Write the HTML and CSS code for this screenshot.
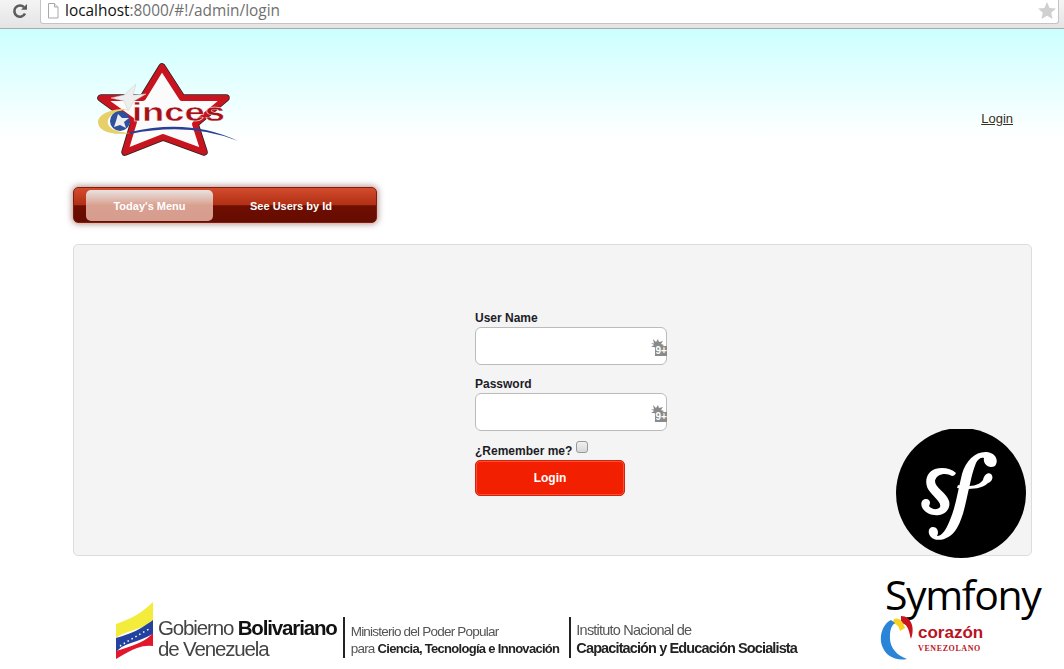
FILE: index.html
```html
<!DOCTYPE html>
<html lang="en">
<head>
    <meta charset="UTF-8">
    <title>Login</title>
    <link rel="stylesheet" href="styles.css">
</head>
<body>
<!-- barra del navegador -->
<div class="toolbar">
    <svg class="reload" width="16" height="16" viewBox="0 0 16 16">
        <path d="M13 10.5A5.6 5.6 0 1 1 12 4.2" fill="none" stroke="#5c5c5c" stroke-width="2.6"/>
        <path d="M9 6.8h6V1z" fill="#5c5c5c"/>
    </svg>
    <div class="urlbox">
        <svg class="pageicon" width="12" height="16" viewBox="0 0 12 16">
            <path d="M1.5.5h6l3.5 3.5v11H1.5z" fill="#fff" stroke="#a8a8a8"/>
            <path d="M7.5.5v3.5H11" fill="#eee" stroke="#a8a8a8"/>
        </svg>
        <span class="url"><b>localhost</b>:8000/#!/admin/login</span>
        <svg class="bookmark" width="18" height="17" viewBox="0 0 18 17">
            <path d="M9 0l2.6 5.9 6.4.6-4.800 4.200 1.400 6.300L9 13.700 3.400 17l1.400-6.300L0 6.500l6.400-.6z" fill="#d0d0d0"/>
        </svg>
    </div>
</div>

<div class="page">
    <div class="header">
        <svg class="logo" width="146" height="100" viewBox="95 60 146 100">
            <polygon points="162,67 182,98 226,98 195,124 204,152 163,137 125,152 134,122 101,98 143,98" fill="#222" stroke="#222" stroke-width="7.500" stroke-linejoin="round"/>
            <polygon points="162,67 182,98 226,98 195,124 204,152 163,137 125,152 134,122 101,98 143,98" fill="#fbfbfb" stroke="#c8141e" stroke-width="6" stroke-linejoin="round"/>
            <path d="M128 109C112 108 98 114 98 122C98 131 112 136 130 133C116 132 106 128 108 120C110 114 118 111 128 109z" fill="#e8d068"/>
            <circle cx="120" cy="121" r="10" fill="#2f4f9f"/>
            <path d="M130 132Q190 118 238 141Q190 122 130 134z" fill="#2a3f96"/>
            <polygon points="136,84 133,95 146,94 134,101 128,111 124,101 111,98 124,95" fill="#eee" stroke="#ccc" stroke-width=".5"/>
            <polygon points="118,114 122,118 129,118 124,122 126,128 120,125 114,127 116,121" fill="#eee"/>
            <text class="logotext" x="132" y="121" textLength="93" lengthAdjust="spacingAndGlyphs">inces</text>
        </svg>
        <a class="login-link" href="#">Login</a>
    </div>

    <div class="menu">
        <a class="menu-item active" href="#">Today's Menu</a>
        <a class="menu-item" href="#">See Users by Id</a>
    </div>

    <div class="panel">
        <form class="login-form">
            <label class="field-label">User Name</label>
            <div class="input-wrap">
                <input type="text" class="field">
                <svg class="ext" width="16" height="18" viewBox="0 0 16 18">
                    <path d="M2 1l3 3 2-3 1 3 4-1-2 3 3 1-3 2v2H6L3 9 0 9l3-2-3-2 3 .5z" fill="#8a8a8a"/>
                    <rect x="4" y="8" width="12" height="10" fill="#8a8a8a"/>
                    <text class="ext-text" x="4.500" y="16">9+</text>
                </svg>
            </div>
            <label class="field-label">Password</label>
            <div class="input-wrap">
                <input type="password" class="field">
                <svg class="ext" width="16" height="18" viewBox="0 0 16 18">
                    <path d="M2 1l3 3 2-3 1 3 4-1-2 3 3 1-3 2v2H6L3 9 0 9l3-2-3-2 3 .5z" fill="#8a8a8a"/>
                    <rect x="4" y="8" width="12" height="10" fill="#8a8a8a"/>
                    <text class="ext-text" x="4.500" y="16">9+</text>
                </svg>
            </div>
            <div class="remember">
                <span>¿Remember me?</span>
                <span class="check"></span>
            </div>
            <button type="button" class="login-btn">Login</button>
        </form>
    </div>

    <div class="footer">
        <svg class="flag" width="39" height="58" viewBox="0 0 39 58">
            <path d="M1 22Q18 16 26 10T38 0V20Q26 26 16 29T1 36z" fill="#f4ec3c"/>
            <path d="M1 36Q18 31 26 26T38 18V32Q26 38 16 41T1 50z" fill="#2342a0"/>
            <path d="M1 49Q18 44 26 40T38 31V44Q30 43 22 46T1 57z" fill="#e2172b"/>
            <path d="M5 44Q18 36 34 27" fill="none" stroke="#fff" stroke-width="1.500" stroke-dasharray="1.500 3"/>
        </svg>
        <div class="gob">
            <div>Gobierno <b>Bolivariano</b></div>
            <div>de Venezuela</div>
        </div>
        <div class="min">
            <div>Ministerio del Poder Popular</div>
            <div>para <b>Ciencia, Tecnología e Innovación</b></div>
        </div>
        <div class="inst">
            <div>Instituto Nacional de</div>
            <div><b>Capacitación y Educación Socialista</b></div>
        </div>
    </div>

    <!-- logos sobre el panel -->
    <div class="side">
        <div class="sf-crop">
            <svg class="sf" width="130" height="130" viewBox="0 0 130 130">
                <circle cx="65" cy="65" r="65" fill="#000"/>
                <g fill="#fff">
                    <path d="M99 38C103 33 100 25 91 24C80 23 70 32 66 46C62 62 60 78 54 92C50 102 46 108 41 108C43 105 42 99 37 99C32 99 31 106 36 110C42 114 54 112 61 100C68 88 70 72 74 56C76 46 78 40 80 35C82 31 85 29 88 30C87 34 90 39 95 39Q97 39 99 38z"/>
                    <path d="M62 57C70 59 82 59 87 52C88 47 92 44 95 46C98 49 96 54 92 55C86 61 74 62 61 60z"/>
                    <path d="M60 45C59 47 58 48 56 48C50 44 40 46 39 53C39 60 50 64 53 73C55 80 50 86 43 87C36 88 30 85 27 81C24 77 25 71 30 71C34 71 35 75 33 78C36 82 42 82 44 79C46 74 36 68 32 61C28 53 31 44 39 41C46 39 55 40 60 45z"/>
                </g>
            </svg>
        </div>
        <div class="sf-name">Symfony</div>
        <div class="corazon">
            <svg width="36" height="46" viewBox="0 0 36 46">
                <path d="M21 1C32 1 35 14 31 24C29 18 29 9 21 8z" fill="#c8141e"/>
                <path d="M14 4C19 2 23 6 25 13L20 16C19 11 16 8 12 9z" fill="#f7d21e"/>
                <path d="M11 5C2 9-2 24 3 33C7 42 17 46 27 44C17 41 9 32 10 21C10 16 11 11 15 8z" fill="#2a84d8"/>
            </svg>
            <div class="corazon-text">
                <div class="cz1">corazón</div>
                <div class="cz2">VENEZOLANO</div>
            </div>
        </div>
    </div>
</div>
</body>
</html>
```

FILE: styles.css
```css
* {
    margin: 0;
    padding: 0;
    box-sizing: border-box;
}

html, body {
    height: 669px;
    overflow: hidden;
}

body {
    font-family: "Liberation Sans", Arial, sans-serif;
    background-color: #fff;
}

/* barra del navegador */
.toolbar {
    height: 29px;
    display: flex;
    align-items: flex-start;
    padding: 0 5px 0 12px;
    background: linear-gradient(#f4f4f4, #e4e4e4);
    border-bottom: 1px solid #a9a9a9;
}

.reload {
    margin-top: 3px;
    flex: none;
}

.urlbox {
    flex: 1;
    height: 24px;
    margin-left: 12px;
    display: flex;
    align-items: center;
    background-color: #fff;
    border: 1px solid #c4c4c4;
    border-top: none;
    border-radius: 0 0 3px 3px;
    padding: 0 2px 2px 6px;
}

.url {
    font-family: "Open Sans", sans-serif;
    font-size: 15.4px;
    color: #6f6f6f;
    margin-left: 6px;
    flex: 1;
}

.url b {
    font-weight: 400;
    color: #111;
}

/* pagina */
.page {
    position: relative;
    height: 640px;
    padding: 0 32px 0 73px;
    background: linear-gradient(#ccffff 0, #fff 110px);
}

.header {
    height: 155px;
    display: flex;
    align-items: flex-start;
    justify-content: space-between;
}

.logo {
    margin: 31px 0 0 22px;
}

.login-link {
    margin: 82px 19px 0 0;
    font-size: 13px;
    color: #3a3020;
}

/* menu */
.menu {
    width: 304px;
    height: 36px;
    margin-top: 3px;
    display: flex;
    padding: 3px 0 0 12px;
    border-radius: 5px;
    border: 1px solid #8a1a08;
    background: linear-gradient(#d34c2e 0, #b12f14 50%, #6e0e00 52%, #660c00 100%);
    box-shadow: 0 0 6px 1px rgba(90, 40, 30, .5);
}

.menu-item {
    width: 127px;
    height: 31px;
    line-height: 32px;
    text-align: center;
    font-size: 11px;
    font-weight: bold;
    color: #fff;
    text-decoration: none;
    border-radius: 5px;
    margin-top: -1px;
}

.menu-item.active {
    background: linear-gradient(#e9e2df, #d9a090 50%, #d69c8e);
}

.menu-item + .menu-item {
    width: 156px;
}

/* panel del formulario */
.panel {
    height: 312px;
    margin-top: 21px;
    padding: 66px 0 0 401px;
    background-color: #f4f4f4;
    border: 1px solid #ddd;
    border-radius: 5px;
}

.login-form {
    width: 192px;
}

.field-label {
    display: block;
    font-size: 12px;
    font-weight: bold;
    line-height: 14px;
    margin-bottom: 2px;
    color: #1c1c28;
}

.input-wrap {
    position: relative;
    height: 38px;
    margin-bottom: 12px;
}

.field {
    width: 100%;
    height: 100%;
    border: 1px solid #bbb;
    border-radius: 6px;
    background-color: #fff;
}

.ext {
    position: absolute;
    right: 0;
    top: 11px;
}

.ext-text {
    font-size: 10px;
    font-weight: bold;
    fill: #fff;
}

.remember {
    display: flex;
    align-items: flex-start;
    gap: 4px;
    height: 18px;
    font-size: 12px;
    font-weight: bold;
    color: #1c1c28;
    margin-top: -2px;
}

.remember span:first-child {
    margin-top: 3px;
}

.check {
    width: 12px;
    height: 12px;
    border: 1px solid #999;
    border-radius: 3px;
    background: linear-gradient(#f0f0f0, #d8d8d8);
}

.login-btn {
    display: block;
    width: 150px;
    height: 36px;
    margin-top: 1px;
    background-color: #f21f00;
    color: #fff;
    border: 1px solid #d8200a;
    box-shadow: inset 0 0 0 1px #f4503a;
    border-radius: 5px;
    font-family: inherit;
    font-size: 12px;
    font-weight: bold;
}

/* pie */
.footer {
    display: flex;
    align-items: flex-end;
    margin: 46px 0 0 42px;
    height: 58px;
    color: #333;
    filter: blur(.35px);
}

.flag {
    flex: none;
}

.gob {
    margin: 0 0 1px 4px;
    font-size: 20.5px;
    line-height: 21px;
    letter-spacing: -1.15px;
    color: #444;
    white-space: nowrap;
}

.gob b {
    color: #111;
}

.min {
    margin: 0 0 2px 6px;
    padding: 6px 0 0 6px;
    border-left: 2px solid #222;
    height: 41px;
    font-size: 13.5px;
    line-height: 17px;
    letter-spacing: -.78px;
    color: #555;
    white-space: nowrap;
}

.min b, .inst b {
    color: #222;
}

.min b {
    font-size: 13px;
    letter-spacing: -.7px;
}

.inst {
    margin: 0 0 2px 10px;
    padding: 4px 0 0 5px;
    border-left: 2px solid #222;
    height: 41px;
    font-size: 14.5px;
    line-height: 18px;
    letter-spacing: -.78px;
    color: #555;
    white-space: nowrap;
}

.inst b {
    letter-spacing: -.88px;
}

/* logos de la derecha */
.side {
    position: absolute;
    left: 880px;
    top: 400px;
    width: 170px;
}

.sf-crop {
    width: 130px;
    height: 129px;
    margin-left: 16px;
    overflow: hidden;
}

.sf {
    display: block;
    margin-top: -1px;
}

.sf-name {
    font-family: "Open Sans", sans-serif;
    font-size: 41px;
    line-height: 40px;
    margin: 16px 0 0 5px;
    letter-spacing: -1.4px;
    color: #000;
}

.corazon {
    display: flex;
    align-items: center;
    gap: 2px;
    margin-top: 1px;
}

.cz1 {
    font-size: 17px;
    line-height: 20px;
    font-weight: bold;
    color: #b8141e;
}

.cz2 {
    font-family: "Liberation Serif", serif;
    font-size: 8px;
    font-weight: bold;
    letter-spacing: .6px;
    line-height: 9px;
    margin-top: 1px;
    color: #b8141e;
}

.logotext {
    font-family: "Liberation Sans", Arial, sans-serif;
    font-size: 26px;
    font-weight: bold;
    fill: #a81018;
    stroke: #fff;
    stroke-width: .4px;
}
```
